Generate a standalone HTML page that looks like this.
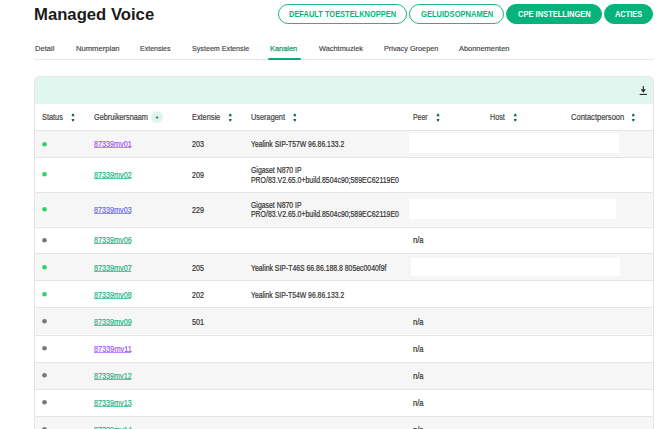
<!DOCTYPE html>
<html><head><meta charset="utf-8"><style>
html,body{margin:0;padding:0;background:#fff;width:670px;height:429px;overflow:hidden;position:relative}
body{font-family:"Liberation Sans",sans-serif}
.t{position:absolute;white-space:nowrap;transform-origin:0 0}
.btn{position:absolute;top:4px;height:19.8px;box-sizing:border-box;border:1.7px solid #1fb784;border-radius:11px}
.card{position:absolute;left:34px;top:76px;width:620px;height:400px;border:1px solid #e6e6e6;border-radius:5px;box-sizing:border-box;background:#fff}
.chead{position:absolute;left:35px;top:77px;width:618px;height:27px;background:#e0f6ef;border-radius:4px 4px 0 0}
.row{position:absolute;left:35px;width:618px;border-top:1px solid #e4e4e4;box-sizing:border-box}
</style></head><body>
<div class="btn" style="left:278px;width:129px;background:#fff;"></div>
<div class="btn" style="left:409.3px;width:94.39999999999998px;background:#fff;"></div>
<div class="btn" style="left:506px;width:95.70000000000005px;background:#07b37b;border-color:#07b37b"></div>
<div class="btn" style="left:604px;width:49.299999999999955px;background:#07b37b;border-color:#07b37b"></div>
<div style="position:absolute;left:34px;top:59px;width:620px;height:1px;background:#e6e6e6"></div>
<div style="position:absolute;left:268.2px;top:58px;width:33px;height:2.2px;border-radius:1px;background:#12a874"></div>
<div class="card"></div>
<div class="chead"></div>
<svg style="position:absolute;left:0;top:0" width="670" height="110" viewBox="0 0 670 110"><rect x="642.75" y="86" width="1.1" height="5.2" fill="#2a2a2a"/><path d="M640.7 89.3 H645.9 L643.3 92.7 Z" fill="#2a2a2a"/><rect x="639.7" y="93.9" width="7.2" height="1.1" fill="#2a2a2a"/></svg>
<svg style="position:absolute;left:0;top:0" width="670" height="130" viewBox="0 0 670 130"><path d="M71.50 116.2 H74.50 L73.70 113.8 H72.30 Z" fill="#106b4b"/><path d="M71.50 118.9 H74.50 L73.70 121.3 H72.30 Z" fill="#106b4b"/><path d="M228.80 116.2 H231.80 L231.00 113.8 H229.60 Z" fill="#106b4b"/><path d="M228.80 118.9 H231.80 L231.00 121.3 H229.60 Z" fill="#106b4b"/><path d="M293.30 116.2 H296.30 L295.50 113.8 H294.10 Z" fill="#106b4b"/><path d="M293.30 118.9 H296.30 L295.50 121.3 H294.10 Z" fill="#106b4b"/><path d="M436.50 116.2 H439.50 L438.70 113.8 H437.30 Z" fill="#106b4b"/><path d="M436.50 118.9 H439.50 L438.70 121.3 H437.30 Z" fill="#106b4b"/><path d="M513.80 116.2 H516.80 L516.00 113.8 H514.60 Z" fill="#106b4b"/><path d="M513.80 118.9 H516.80 L516.00 121.3 H514.60 Z" fill="#106b4b"/><path d="M631.80 116.2 H634.80 L634.00 113.8 H632.60 Z" fill="#106b4b"/><path d="M631.80 118.9 H634.80 L634.00 121.3 H632.60 Z" fill="#106b4b"/></svg>
<svg style="position:absolute;left:0;top:100px" width="200" height="30" viewBox="0 100 200 30"><circle cx="157.1" cy="117.2" r="5.9" fill="#dff4ec"/><path d="M155.6 118.3 H158.6 L157.1 116.0 Z" fill="#0f6a4a"/></svg>
<div class="row" style="top:130px;height:27px;background:#f6f6f6"></div>
<div style="position:absolute;left:409px;top:133px;width:210px;height:20px;background:#fff"></div>
<div style="position:absolute;left:94.2px;top:147px;width:37px;height:1px;background:#a35cf0;opacity:0.75"></div>
<svg style="position:absolute;left:38px;top:137.50px" width="12" height="12"><circle cx="6.5" cy="6.3" r="2.3" fill="#2ed35d"/></svg>
<div class="row" style="top:157px;height:34.80000000000001px;background:#fff"></div>
<div style="position:absolute;left:94.2px;top:178px;width:37px;height:1px;background:#28b384;opacity:0.75"></div>
<svg style="position:absolute;left:38px;top:168.40px" width="12" height="12"><circle cx="6.5" cy="6.3" r="2.3" fill="#2ed35d"/></svg>
<div class="row" style="top:191.8px;height:34.69999999999999px;background:#f6f6f6"></div>
<div style="position:absolute;left:409px;top:199px;width:206.60000000000002px;height:19.5px;background:#fff"></div>
<div style="position:absolute;left:94.2px;top:213px;width:37px;height:1px;background:#6a6fe0;opacity:0.75"></div>
<svg style="position:absolute;left:38px;top:203.15px" width="12" height="12"><circle cx="6.5" cy="6.3" r="2.3" fill="#2ed35d"/></svg>
<div class="row" style="top:226.5px;height:26.80000000000001px;background:#fff"></div>
<div style="position:absolute;left:94.2px;top:243px;width:37px;height:1px;background:#28b384;opacity:0.75"></div>
<svg style="position:absolute;left:38px;top:233.90px" width="12" height="12"><circle cx="6.5" cy="6.3" r="2.3" fill="#777"/></svg>
<div class="row" style="top:253.3px;height:27.099999999999966px;background:#f6f6f6"></div>
<div style="position:absolute;left:411px;top:258px;width:209px;height:18px;background:#fff"></div>
<div style="position:absolute;left:94.2px;top:271px;width:37px;height:1px;background:#28b384;opacity:0.75"></div>
<svg style="position:absolute;left:38px;top:260.85px" width="12" height="12"><circle cx="6.5" cy="6.3" r="2.3" fill="#2ed35d"/></svg>
<div class="row" style="top:280.4px;height:26.900000000000034px;background:#fff"></div>
<div style="position:absolute;left:94.2px;top:298px;width:37px;height:1px;background:#28b384;opacity:0.75"></div>
<svg style="position:absolute;left:38px;top:287.85px" width="12" height="12"><circle cx="6.5" cy="6.3" r="2.3" fill="#2ed35d"/></svg>
<div class="row" style="top:307.3px;height:27.19999999999999px;background:#f6f6f6"></div>
<div style="position:absolute;left:94.2px;top:325px;width:37px;height:1px;background:#28b384;opacity:0.75"></div>
<svg style="position:absolute;left:38px;top:314.90px" width="12" height="12"><circle cx="6.5" cy="6.3" r="2.3" fill="#777"/></svg>
<div class="row" style="top:334.5px;height:27.19999999999999px;background:#fff"></div>
<div style="position:absolute;left:94.2px;top:352px;width:37px;height:1px;background:#a35cf0;opacity:0.75"></div>
<svg style="position:absolute;left:38px;top:342.10px" width="12" height="12"><circle cx="6.5" cy="6.3" r="2.3" fill="#777"/></svg>
<div class="row" style="top:361.7px;height:27.100000000000023px;background:#f6f6f6"></div>
<div style="position:absolute;left:94.2px;top:379px;width:37px;height:1px;background:#28b384;opacity:0.75"></div>
<svg style="position:absolute;left:38px;top:369.25px" width="12" height="12"><circle cx="6.5" cy="6.3" r="2.3" fill="#777"/></svg>
<div class="row" style="top:388.8px;height:27.099999999999966px;background:#fff"></div>
<div style="position:absolute;left:94.2px;top:406px;width:37px;height:1px;background:#28b384;opacity:0.75"></div>
<svg style="position:absolute;left:38px;top:396.35px" width="12" height="12"><circle cx="6.5" cy="6.3" r="2.3" fill="#777"/></svg>
<div class="row" style="top:415.9px;height:27.100000000000023px;background:#f6f6f6"></div>
<div style="position:absolute;left:94.2px;top:433px;width:37px;height:1px;background:#28b384;opacity:0.75"></div>
<svg style="position:absolute;left:38px;top:423.45px" width="12" height="12"><circle cx="6.5" cy="6.3" r="2.3" fill="#777"/></svg>
<div class="t" id="title" style="left:34.49px;top:5px;font-size:16.1px;line-height:19px;color:#1b1b1b;font-weight:bold;transform:scaleX(1.0363);-webkit-text-stroke:0px currentColor;">Managed Voice</div>
<div class="t" id="b1" style="left:289.25px;top:9px;font-size:8.4px;line-height:10px;color:#07b37b;font-weight:bold;transform:scaleX(0.8906);-webkit-text-stroke:0px currentColor;">DEFAULT TOESTELKNOPPEN</div>
<div class="t" id="b2" style="left:420.61px;top:9px;font-size:8.4px;line-height:10px;color:#07b37b;font-weight:bold;transform:scaleX(0.9035);-webkit-text-stroke:0px currentColor;">GELUIDSOPNAMEN</div>
<div class="t" id="b3" style="left:518.02px;top:9px;font-size:8.4px;line-height:10px;color:#fff;font-weight:bold;transform:scaleX(0.8991);-webkit-text-stroke:0px currentColor;">CPE INSTELLINGEN</div>
<div class="t" id="b4" style="left:614.68px;top:9px;font-size:8.4px;line-height:10px;color:#fff;font-weight:bold;transform:scaleX(0.8820);-webkit-text-stroke:0px currentColor;">ACTIES</div>
<div class="t" id="tab0" style="left:35.29px;top:44px;font-size:7.6px;line-height:9px;color:#454545;font-weight:normal;transform:scaleX(1.0004);-webkit-text-stroke:0.16px currentColor;">Detail</div>
<div class="t" id="tab1" style="left:75.55px;top:44px;font-size:7.6px;line-height:9px;color:#454545;font-weight:normal;transform:scaleX(1.0032);-webkit-text-stroke:0.16px currentColor;">Nummerplan</div>
<div class="t" id="tab2" style="left:140.38px;top:44px;font-size:7.6px;line-height:9px;color:#454545;font-weight:normal;transform:scaleX(0.9240);-webkit-text-stroke:0.16px currentColor;">Extensies</div>
<div class="t" id="tab3" style="left:192.42px;top:44px;font-size:7.6px;line-height:9px;color:#454545;font-weight:normal;transform:scaleX(0.9412);-webkit-text-stroke:0.16px currentColor;">Systeem Extensie</div>
<div class="t" id="tab4" style="left:269.72px;top:44px;font-size:7.6px;line-height:9px;color:#12a271;font-weight:normal;transform:scaleX(0.9770);-webkit-text-stroke:0.25px currentColor;">Kanalen</div>
<div class="t" id="tab5" style="left:318.52px;top:44px;font-size:7.6px;line-height:9px;color:#454545;font-weight:normal;transform:scaleX(0.9728);-webkit-text-stroke:0.16px currentColor;">Wachtmuziek</div>
<div class="t" id="tab6" style="left:383.95px;top:44px;font-size:7.6px;line-height:9px;color:#454545;font-weight:normal;transform:scaleX(0.9607);-webkit-text-stroke:0.16px currentColor;">Privacy Groepen</div>
<div class="t" id="tab7" style="left:459.36px;top:44px;font-size:7.6px;line-height:9px;color:#454545;font-weight:normal;transform:scaleX(0.9787);-webkit-text-stroke:0.16px currentColor;">Abonnementen</div>
<div class="t" id="h0" style="left:42.01px;top:113px;font-size:8.2px;line-height:9px;color:#444;font-weight:normal;transform:scaleX(0.8970);-webkit-text-stroke:0.2px currentColor;">Status</div>
<div class="t" id="h1" style="left:93.89px;top:113px;font-size:8.2px;line-height:9px;color:#444;font-weight:normal;transform:scaleX(0.8909);-webkit-text-stroke:0.2px currentColor;">Gebruikersnaam</div>
<div class="t" id="h2" style="left:192.31px;top:113px;font-size:8.2px;line-height:9px;color:#444;font-weight:normal;transform:scaleX(0.8956);-webkit-text-stroke:0.2px currentColor;">Extensie</div>
<div class="t" id="h3" style="left:251.36px;top:113px;font-size:8.2px;line-height:9px;color:#444;font-weight:normal;transform:scaleX(0.8999);-webkit-text-stroke:0.2px currentColor;">Useragent</div>
<div class="t" id="h4" style="left:412.81px;top:113px;font-size:8.2px;line-height:9px;color:#444;font-weight:normal;transform:scaleX(0.8442);-webkit-text-stroke:0.2px currentColor;">Peer</div>
<div class="t" id="h5" style="left:489.65px;top:113px;font-size:8.2px;line-height:9px;color:#444;font-weight:normal;transform:scaleX(0.8740);-webkit-text-stroke:0.2px currentColor;">Host</div>
<div class="t" id="h6" style="left:570.87px;top:113px;font-size:8.2px;line-height:9px;color:#444;font-weight:normal;transform:scaleX(0.9206);-webkit-text-stroke:0.2px currentColor;">Contactpersoon</div>
<div class="t" id="lk0" style="left:93.55px;top:139px;font-size:8.4px;line-height:10px;color:#a35cf0;font-weight:normal;transform:scaleX(0.8629);-webkit-text-stroke:0.2px currentColor;">87339mv01</div>
<div class="t" id="ex0" style="left:191.71px;top:139px;font-size:8.3px;line-height:10px;color:#333;font-weight:normal;transform:scaleX(0.8641);-webkit-text-stroke:0.2px currentColor;">203</div>
<div class="t" id="ua0" style="left:251.00px;top:140px;font-size:8.2px;line-height:9px;color:#333;font-weight:normal;transform:scaleX(0.8345);-webkit-text-stroke:0.2px currentColor;">Yealink SIP-T57W 96.86.133.2</div>
<div class="t" id="lk1" style="left:93.55px;top:170px;font-size:8.4px;line-height:10px;color:#28b384;font-weight:normal;transform:scaleX(0.8629);-webkit-text-stroke:0.2px currentColor;">87339mv02</div>
<div class="t" id="ex1" style="left:191.71px;top:170px;font-size:8.3px;line-height:10px;color:#333;font-weight:normal;transform:scaleX(0.8616);-webkit-text-stroke:0.2px currentColor;">209</div>
<div class="t" id="ua1a" style="left:250.91px;top:166px;font-size:8.2px;line-height:9px;color:#333;font-weight:normal;transform:scaleX(0.8415);-webkit-text-stroke:0.2px currentColor;">Gigaset N870 IP</div>
<div class="t" id="ua1b" style="left:251.45px;top:176px;font-size:8.2px;line-height:9px;color:#333;font-weight:normal;transform:scaleX(0.8457);-webkit-text-stroke:0.2px currentColor;">PRO/83.V2.65.0+build.8504c90;589EC62119E0</div>
<div class="t" id="lk2" style="left:93.55px;top:205px;font-size:8.4px;line-height:10px;color:#6a6fe0;font-weight:normal;transform:scaleX(0.8624);-webkit-text-stroke:0.2px currentColor;">87339mv03</div>
<div class="t" id="ex2" style="left:191.71px;top:205px;font-size:8.3px;line-height:10px;color:#333;font-weight:normal;transform:scaleX(0.8616);-webkit-text-stroke:0.2px currentColor;">229</div>
<div class="t" id="ua2a" style="left:250.91px;top:201px;font-size:8.2px;line-height:9px;color:#333;font-weight:normal;transform:scaleX(0.8415);-webkit-text-stroke:0.2px currentColor;">Gigaset N870 IP</div>
<div class="t" id="ua2b" style="left:251.45px;top:210px;font-size:8.2px;line-height:9px;color:#333;font-weight:normal;transform:scaleX(0.8457);-webkit-text-stroke:0.2px currentColor;">PRO/83.V2.65.0+build.8504c90;589EC62119E0</div>
<div class="t" id="lk3" style="left:93.55px;top:235px;font-size:8.4px;line-height:10px;color:#28b384;font-weight:normal;transform:scaleX(0.8624);-webkit-text-stroke:0.2px currentColor;">87339mv06</div>
<div class="t" id="pe3" style="left:413.31px;top:236px;font-size:8.2px;line-height:9px;color:#333;font-weight:normal;transform:scaleX(0.9279);-webkit-text-stroke:0.2px currentColor;">n/a</div>
<div class="t" id="lk4" style="left:93.55px;top:263px;font-size:8.4px;line-height:10px;color:#28b384;font-weight:normal;transform:scaleX(0.8608);-webkit-text-stroke:0.2px currentColor;">87339mv07</div>
<div class="t" id="ex4" style="left:191.71px;top:263px;font-size:8.3px;line-height:10px;color:#333;font-weight:normal;transform:scaleX(0.8599);-webkit-text-stroke:0.2px currentColor;">205</div>
<div class="t" id="ua4" style="left:250.94px;top:264px;font-size:8.2px;line-height:9px;color:#333;font-weight:normal;transform:scaleX(0.8397);-webkit-text-stroke:0.2px currentColor;">Yealink SIP-T46S 66.86.188.8 805ec0040f9f</div>
<div class="t" id="lk5" style="left:93.55px;top:290px;font-size:8.4px;line-height:10px;color:#28b384;font-weight:normal;transform:scaleX(0.8620);-webkit-text-stroke:0.2px currentColor;">87339mv08</div>
<div class="t" id="ex5" style="left:191.71px;top:290px;font-size:8.3px;line-height:10px;color:#333;font-weight:normal;transform:scaleX(0.8586);-webkit-text-stroke:0.2px currentColor;">202</div>
<div class="t" id="ua5" style="left:251.00px;top:291px;font-size:8.2px;line-height:9px;color:#333;font-weight:normal;transform:scaleX(0.8345);-webkit-text-stroke:0.2px currentColor;">Yealink SIP-T54W 96.86.133.2</div>
<div class="t" id="lk6" style="left:93.55px;top:317px;font-size:8.4px;line-height:10px;color:#28b384;font-weight:normal;transform:scaleX(0.8603);-webkit-text-stroke:0.2px currentColor;">87339mv09</div>
<div class="t" id="ex6" style="left:192.33px;top:317px;font-size:8.3px;line-height:10px;color:#333;font-weight:normal;transform:scaleX(0.8752);-webkit-text-stroke:0.2px currentColor;">501</div>
<div class="t" id="pe6" style="left:413.31px;top:318px;font-size:8.2px;line-height:9px;color:#333;font-weight:normal;transform:scaleX(0.9279);-webkit-text-stroke:0.2px currentColor;">n/a</div>
<div class="t" id="lk7" style="left:93.56px;top:344px;font-size:8.4px;line-height:10px;color:#a35cf0;font-weight:normal;transform:scaleX(0.8758);-webkit-text-stroke:0.2px currentColor;">87339mv11</div>
<div class="t" id="pe7" style="left:413.31px;top:345px;font-size:8.2px;line-height:9px;color:#333;font-weight:normal;transform:scaleX(0.9279);-webkit-text-stroke:0.2px currentColor;">n/a</div>
<div class="t" id="lk8" style="left:93.55px;top:371px;font-size:8.4px;line-height:10px;color:#28b384;font-weight:normal;transform:scaleX(0.8629);-webkit-text-stroke:0.2px currentColor;">87339mv12</div>
<div class="t" id="pe8" style="left:413.31px;top:372px;font-size:8.2px;line-height:9px;color:#333;font-weight:normal;transform:scaleX(0.9279);-webkit-text-stroke:0.2px currentColor;">n/a</div>
<div class="t" id="lk9" style="left:93.55px;top:398px;font-size:8.4px;line-height:10px;color:#28b384;font-weight:normal;transform:scaleX(0.8624);-webkit-text-stroke:0.2px currentColor;">87339mv13</div>
<div class="t" id="pe9" style="left:413.31px;top:399px;font-size:8.2px;line-height:9px;color:#333;font-weight:normal;transform:scaleX(0.9279);-webkit-text-stroke:0.2px currentColor;">n/a</div>
<div class="t" id="lk10" style="left:93.55px;top:425px;font-size:8.4px;line-height:10px;color:#28b384;font-weight:normal;transform:scaleX(0.8624);-webkit-text-stroke:0.2px currentColor;">87339mv14</div>
<div class="t" id="pe10" style="left:413.31px;top:426px;font-size:8.2px;line-height:9px;color:#333;font-weight:normal;transform:scaleX(0.9279);-webkit-text-stroke:0.2px currentColor;">n/a</div>
</body></html>
